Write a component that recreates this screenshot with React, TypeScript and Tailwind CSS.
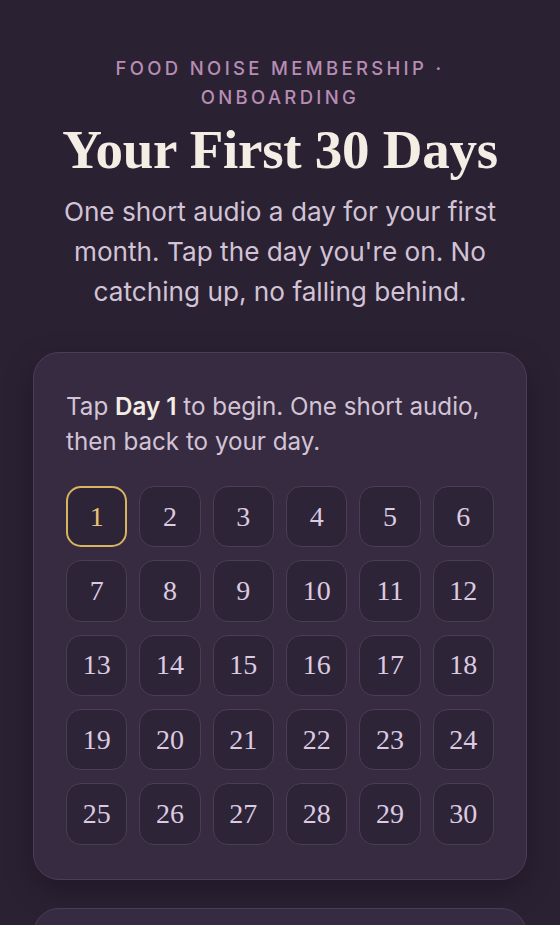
const days = Array.from({ length: 30 }, (_, i) => i + 1);

export default function App() {
  return (
    <div className="min-h-[925px] bg-[#2a2133] px-[33px] pt-[54px] pb-10 font-['Inter',sans-serif]">
      <header className="text-center">
        <p className="mx-auto max-w-[420px] text-[18.5px] font-medium uppercase leading-[29px] tracking-[0.18em] text-[#b88db4]">
          Food Noise Membership · Onboarding
        </p>
        <h1 className="mt-[8px] font-['Liberation_Serif',serif] text-[55px] font-bold leading-[60px] tracking-[-0.005em] text-[#f4ede4]">
          Your First 30 Days
        </h1>
        <p className="mx-auto mt-[12px] max-w-[470px] text-[26.2px] leading-[40px] text-[#d3c3d6]">
          One short audio a day for your first month. Tap the day you're on. No catching up, no falling behind.
        </p>
      </header>

      <section className="mt-[40px] rounded-[26px] border border-[#4a3d55] bg-[#362b40] px-[32px] pt-[36px] pb-[34px] shadow-[0_10px_30px_rgba(0,0,0,0.25)]">
        <p className="text-[24.2px] leading-[35px] text-[#d3c3d6]">
          Tap <span className="font-semibold text-[#f4ede4]">Day 1</span> to begin. One short audio, then back to your day.
        </p>
        <div className="mt-[27px] grid grid-cols-6 gap-x-[12px] gap-y-[13px]">
          {days.map((d) => (
            <button
              key={d}
              type="button"
              className={`flex aspect-square items-center justify-center rounded-[15px] font-['Liberation_Serif',serif] text-[28px] ${
                d === 1
                  ? 'border-2 border-[#d9b45f] bg-[#2e2438] text-[#e6c374]'
                  : 'border border-[#4a3d55] bg-[#2e2438] text-[#dccbe0]'
              }`}
            >
              {d}
            </button>
          ))}
        </div>
      </section>

      <section className="mt-[28px] h-[120px] rounded-[26px] border border-[#4a3d55] bg-[#362b40]" />
    </div>
  );
}
